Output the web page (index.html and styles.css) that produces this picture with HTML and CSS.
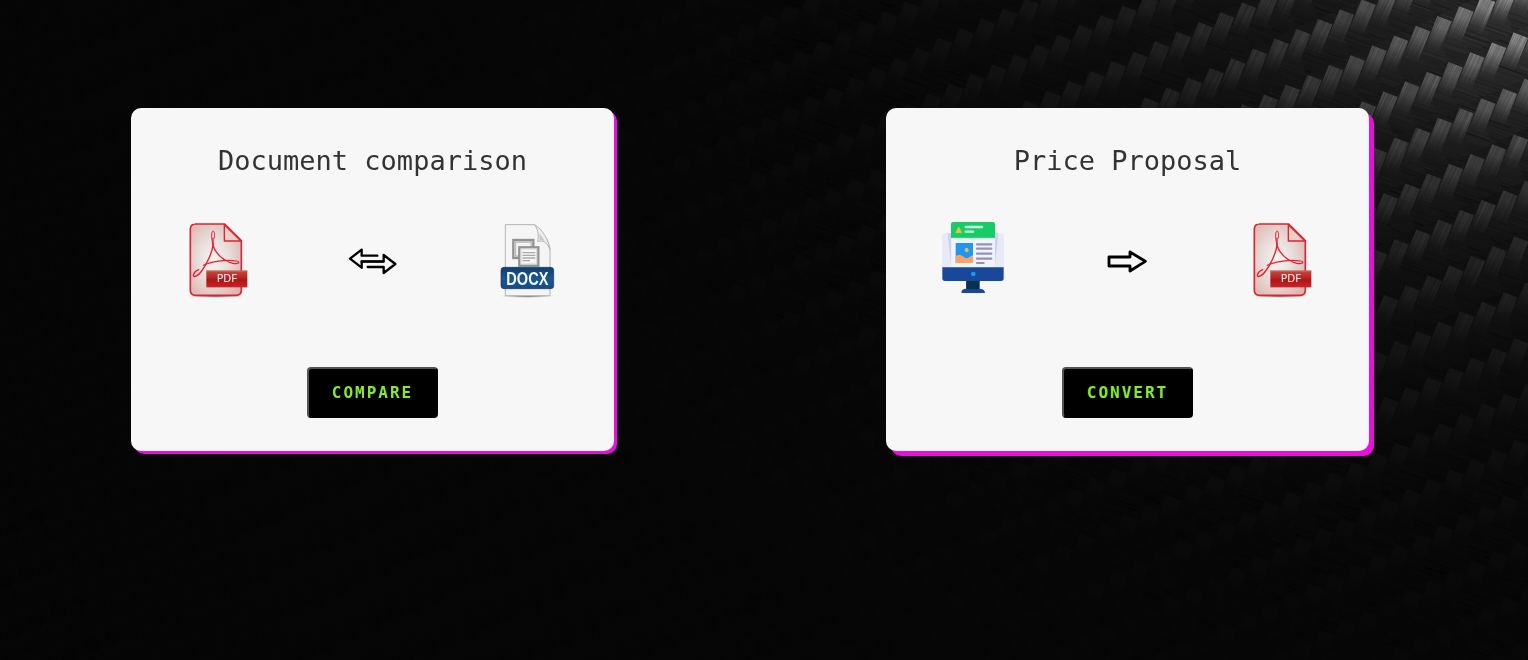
FILE: index.html
```html
<!DOCTYPE html>
<html lang="en">
<head>
<meta charset="utf-8">
<title>Document tools</title>
<link rel="stylesheet" href="styles.css">
</head>
<body>
<canvas class="backdrop" id="backdrop" width="1528" height="660"></canvas>
<svg class="defs" width="0" height="0" aria-hidden="true">
  <defs>
    <radialGradient id="pdfBody" cx=".45" cy=".5" r=".75">
      <stop offset="0" stop-color="#f8f5f3"/><stop offset=".4" stop-color="#e8dedb"/><stop offset="1" stop-color="#dba9a3"/>
    </radialGradient>
    <linearGradient id="pdfTag" x2="0" y2="1">
      <stop offset="0" stop-color="#c24a40"/><stop offset=".45" stop-color="#b8221f"/><stop offset=".55" stop-color="#a91718"/><stop offset="1" stop-color="#ce2228"/>
    </linearGradient>
    <linearGradient id="docxTag" x2="0" y2="1">
      <stop offset="0" stop-color="#123d6c"/><stop offset=".5" stop-color="#1c5590"/><stop offset="1" stop-color="#164c86"/>
    </linearGradient>
    <radialGradient id="ground"><stop offset="0" stop-color="#555"/><stop offset="1" stop-color="#999" stop-opacity="0"/></radialGradient>
    <symbol id="pdf" viewBox="0 0 240 270">
      <ellipse cx="107" cy="243" rx="82" ry="6" fill="url(#ground)"/>
      <path d="M45 27H134L184 77V226Q184 241 169 241H47Q31 241 31 226V43Q31 27 46 27Z" fill="url(#pdfBody)" stroke="#d92632" stroke-width="5"/>
      <path d="M133 29V78H183Z" fill="#edd0c7" stroke="#d92632" stroke-width="4" stroke-linejoin="round"/>
      <g fill="none" stroke="#ed1c2e" stroke-linecap="round">
        <path d="M103 69C105 55 102 46 98 49C93 53 95 76 99 91" stroke-width="3"/>
        <path d="M99 85C99 111 79 149 65 168C50 188 37 188 41 178C43 171 51 166 56 164" stroke-width="4"/>
        <path d="M99 94C108 118 133 139 159 145C178 149 181 139 169 138C137 133 92 140 70 151" stroke-width="3.5"/>
        <path d="M101 94C109 115 122 126 138 137" stroke-width="2"/>
        <path d="M99 70V96" stroke-width="4"/>
      </g>
      <rect x="79" y="167" width="123" height="50" fill="url(#pdfTag)"/>
      <path d="M79 168H202" stroke="#c97068" stroke-width="3"/>
      <text class="pdf-label" x="110" y="201" textLength="61" lengthAdjust="spacingAndGlyphs">PDF</text>
    </symbol>
  </defs>
</svg>

<main class="board">
  <section class="card card-compare">
    <h2 class="title">Document comparison</h2>
    <div class="flow">
      <svg class="icon" viewBox="-6 0 240 270"><use href="#pdf" width="240" height="270"/></svg>
      <svg class="arrow" viewBox="3 0 195 132">
        <g fill="none" stroke="#000" stroke-width="7" stroke-linejoin="round" stroke-linecap="round">
          <path d="M112 47H65V29L30 56L65 83V65H130"/>
          <path d="M83 81H131V99L166 72L131 45V64H65"/>
        </g>
      </svg>
      <svg class="icon" viewBox="-3 0 240 270">
        <ellipse cx="112" cy="243" rx="82" ry="6" fill="url(#ground)"/>
        <path d="M46 29H133C142 35 148 43 152 52C166 61 178 83 180 105V242H46Z" fill="#f5f5f5" stroke="#b4b4b4" stroke-width="3"/>
        <path d="M134 29C146 47 146 64 143 80C158 74 172 82 180 104C177 76 157 43 134 29Z" fill="#eee" stroke="#b5b5b5" stroke-width="3"/>
        <path d="M148 55L149 76L164 77Z" fill="#c9c9c9"/>
        <rect x="70" y="75" width="60" height="54" fill="#f3f3f3" stroke="#929292" stroke-width="7"/>
        <rect x="76" y="81" width="48" height="42" fill="none" stroke="#bdbdbd" stroke-width="5"/>
        <rect x="88" y="97" width="57" height="55" fill="#f6f6f6" stroke="#929292" stroke-width="7"/>
        <rect x="93" y="102" width="47" height="45" fill="none" stroke="#d5d5d5" stroke-width="3"/>
        <path d="M97 113H136M97 121H136M97 129H136M97 137H120" stroke="#aaa" stroke-width="4"/>
        <rect x="33" y="157" width="158" height="64" rx="9" fill="url(#docxTag)" stroke="#103860" stroke-width="2"/>
        <text class="docx-label" x="49" y="210" textLength="126" lengthAdjust="spacingAndGlyphs">DOCX</text>
      </svg>
    </div>
    <button class="action" type="button">COMPARE</button>
  </section>

  <section class="card card-convert">
    <h2 class="title">Price Proposal</h2>
    <div class="flow">
      <svg class="icon" viewBox="9 9 240 270">
        <path d="M44 63H214Q222 63 222 71V168H36V71Q36 63 44 63Z" fill="#e8ebf7"/>
        <path d="M53 64H63V160ZM205 64H195V160Z" fill="#cbd2f1"/>
        <path d="M64 77H194V167H64Z" fill="#f1f4fb"/>
        <path d="M69 30H189Q195 30 195 36V78H63V36Q63 30 69 30Z" fill="#17cc64"/>
        <path d="M64 79H194" stroke="#c8f0dc" stroke-width="3"/>
        <path d="M86 45L95 62H77Z" fill="#efc044" stroke="#efc044" stroke-width="2" stroke-linejoin="round"/>
        <path d="M107 45H156M107 59H129" stroke="#c5fae0" stroke-width="7" stroke-linecap="round"/>
        <rect x="77" y="93" width="52" height="60" fill="#2196f3"/>
        <path d="M77 132C91 124 98 133 106 138C114 142 119 133 129 129V153H77Z" fill="#ffa266"/>
        <ellipse cx="110" cy="114" rx="6" ry="7" fill="#e7bd4c"/>
        <path d="M141 97H184M141 110H184M141 125H184M141 140H184M141 153H161" stroke="#9691b5" stroke-width="6.5" stroke-linecap="round"/>
        <path d="M37 166H221V199Q221 207 213 207H45Q37 207 37 199Z" fill="#184899"/>
        <circle cx="130" cy="186" r="7" fill="#2196f3"/>
        <path d="M109 207H149V234H109Z" fill="#092b50"/>
        <path d="M109 207H149L133 234H109Z" fill="#06334f"/>
        <path d="M94 243C94 234 99 230 109 230Q113 232 119 232H139Q146 232 149 230C160 231 164 234 165 243Z" fill="#184899"/>
      </svg>
      <svg class="arrow" viewBox="-6 0 195 132">
        <path d="M33 51H96V36L142 64L96 93V78H33Z" fill="none" stroke="#000" stroke-width="8.5" stroke-linejoin="round"/>
      </svg>
      <svg class="icon" viewBox="0 0 240 270"><use href="#pdf" width="240" height="270"/></svg>
    </div>
    <button class="action" type="button">CONVERT</button>
  </section>
</main>
<script src="backdrop.js"></script>
</body>
</html>
```
FILE: styles.css
```css
* { box-sizing: border-box; }

body {
  margin: 0;
  min-height: 660px;
  overflow: hidden;
  background: #050505;
  font-family: "DejaVu Sans Mono", monospace;
}

.backdrop {
  position: absolute;
  inset: 0;
  z-index: -1;
}

.defs { position: absolute; }

.board {
  display: flex;
  gap: 272px;
  padding: 108px 131px 0;
}

.card {
  display: flex;
  flex-direction: column;
  align-items: center;
  flex: 0 0 483px;
  height: 343px;
  padding-top: 37px;
  border-radius: 10px;
  background: #f7f7f7;
}

.card-compare { box-shadow: 3px 3px 0 #e60fdc; }
.card-convert { box-shadow: 5px 5px 0 #e60fdc; }

.title {
  margin: 0;
  color: #333;
  font-size: 27px;
  font-weight: 400;
  line-height: 32px;
}

.flow {
  display: flex;
  align-items: flex-start;
  justify-content: space-between;
  width: 100%;
  margin-top: 38px;
  padding: 0 45px 0 47px;
}

.icon { width: 80px; height: 90px; }
.arrow { width: 65px; height: 44px; margin-top: 25px; }

.pdf-label {
  fill: #fff;
  font: 34px "Open Sans", sans-serif;
}

.docx-label {
  fill: #f4f8fc;
  font: bold 56px "Liberation Sans", sans-serif;
}

.action {
  width: 131px;
  height: 51px;
  margin-top: 62px;
  padding: 0;
  border: 2px outset #000;
  border-radius: 4px;
  background: #000;
  color: #84ea33;
  font: bold 16px "DejaVu Sans Mono", monospace;
  letter-spacing: 2px;
}
```
FILE: backdrop.js
```js
// Carbon-fibre weave lit from the top right corner.
const ctx = document.getElementById('backdrop').getContext('2d');
let seed = 7;
const rnd = () => (seed = (seed * 16807) % 2147483647) / 2147483647;
const dist = (x, y) => Math.hypot(1528 - x, y * 1.35);
const grey = (v, a = 1) => `rgba(${v},${v},${v},${a})`;

const towLight = (x, y) => {
  const d = dist(x, y);
  return 6 + 185 * Math.exp(-d / 200) + 18 * Math.exp(-d / 400);
};
const baseLight = (x, y) => 5.5 + 48 * Math.exp(-dist(x, y) / 250);
// Texture contrast drops away with the light
const textureAt = (x, y) => Math.min(1, Math.max(0, (towLight(x, y) - 9) / 40));

ctx.fillStyle = '#050505';
ctx.fillRect(0, 0, 1528, 660);

// Crosswise bundles
function weft(x, y) {
  const base = baseLight(x, y);
  const texture = textureAt(x, y);
  ctx.save();
  ctx.translate(x, y);
  ctx.beginPath();
  ctx.moveTo(-1, 0); ctx.lineTo(23, -10); ctx.lineTo(34, 37); ctx.lineTo(10, 48);
  ctx.closePath();
  const g = ctx.createLinearGradient(14, 0, 8, 44);
  g.addColorStop(0, grey(base * 0.9));
  g.addColorStop(0.4, grey(base * 1.05));
  g.addColorStop(1, grey(base * 0.8));
  ctx.fillStyle = g;
  ctx.fill();
  ctx.clip();
  for (let i = 0; i < 22; i++) {
    const sy = -14 + rnd() * 56;
    ctx.lineWidth = 0.5 + rnd() * 0.7;
    ctx.strokeStyle = rnd() > 0.45 ? grey(base * 1.6, 0.3 * texture) : grey(0, 0.17 * texture);
    ctx.beginPath();
    ctx.moveTo(-2, sy - 2);
    ctx.lineTo(38, sy + 12);
    ctx.stroke();
  }
  ctx.restore();
}

// Bright bundles, fading out towards the lower end
function warp(x, y) {
  const top = towLight(x, y);
  const texture = textureAt(x, y);
  ctx.save();
  ctx.translate(x, y);
  ctx.beginPath();
  ctx.moveTo(0, 0); ctx.lineTo(14.3, 5.5); ctx.lineTo(1, 38); ctx.lineTo(-13, 32);
  ctx.closePath();
  const g = ctx.createLinearGradient(7, 2, -5, 34);
  g.addColorStop(0, grey(top * 0.75, 0.95));
  g.addColorStop(0.3, grey(top * 0.75, 0.9));
  g.addColorStop(0.65, grey(top * 0.55, 0.7));
  g.addColorStop(1, grey(top * 0.35, 0.2));
  ctx.fillStyle = g;
  ctx.fill();
  ctx.clip();
  for (let i = 0; i < 24; i++) {
    const sx = rnd() * 30 - 2;
    const light = rnd() > 0.42;
    const s = ctx.createLinearGradient(0, 0, -8, 34);
    s.addColorStop(0, light ? grey(Math.min(225, top * 1.3), 0.28 * texture) : grey(0, 0.14 * texture));
    s.addColorStop(1, light ? grey(top, 0) : grey(0, 0.05 * texture));
    ctx.lineWidth = 0.4 + rnd() * 0.7;
    ctx.strokeStyle = s;
    ctx.beginPath();
    ctx.moveTo(sx, -2);
    ctx.lineTo(sx - 19, 38);
    ctx.stroke();
  }
  ctx.restore();
}

for (const draw of [weft, warp]) {
  for (let row = -50; row < 52; row++) {
    for (let col = -90; col < 40; col++) {
      const x = 1318 + col * 21.7 + row * 11;
      const y = 19 - col * 9.8 + row * 46;
      if (x > -40 && x < 1560 && y > -50 && y < 700) draw(x, y);
    }
  }
}
```
